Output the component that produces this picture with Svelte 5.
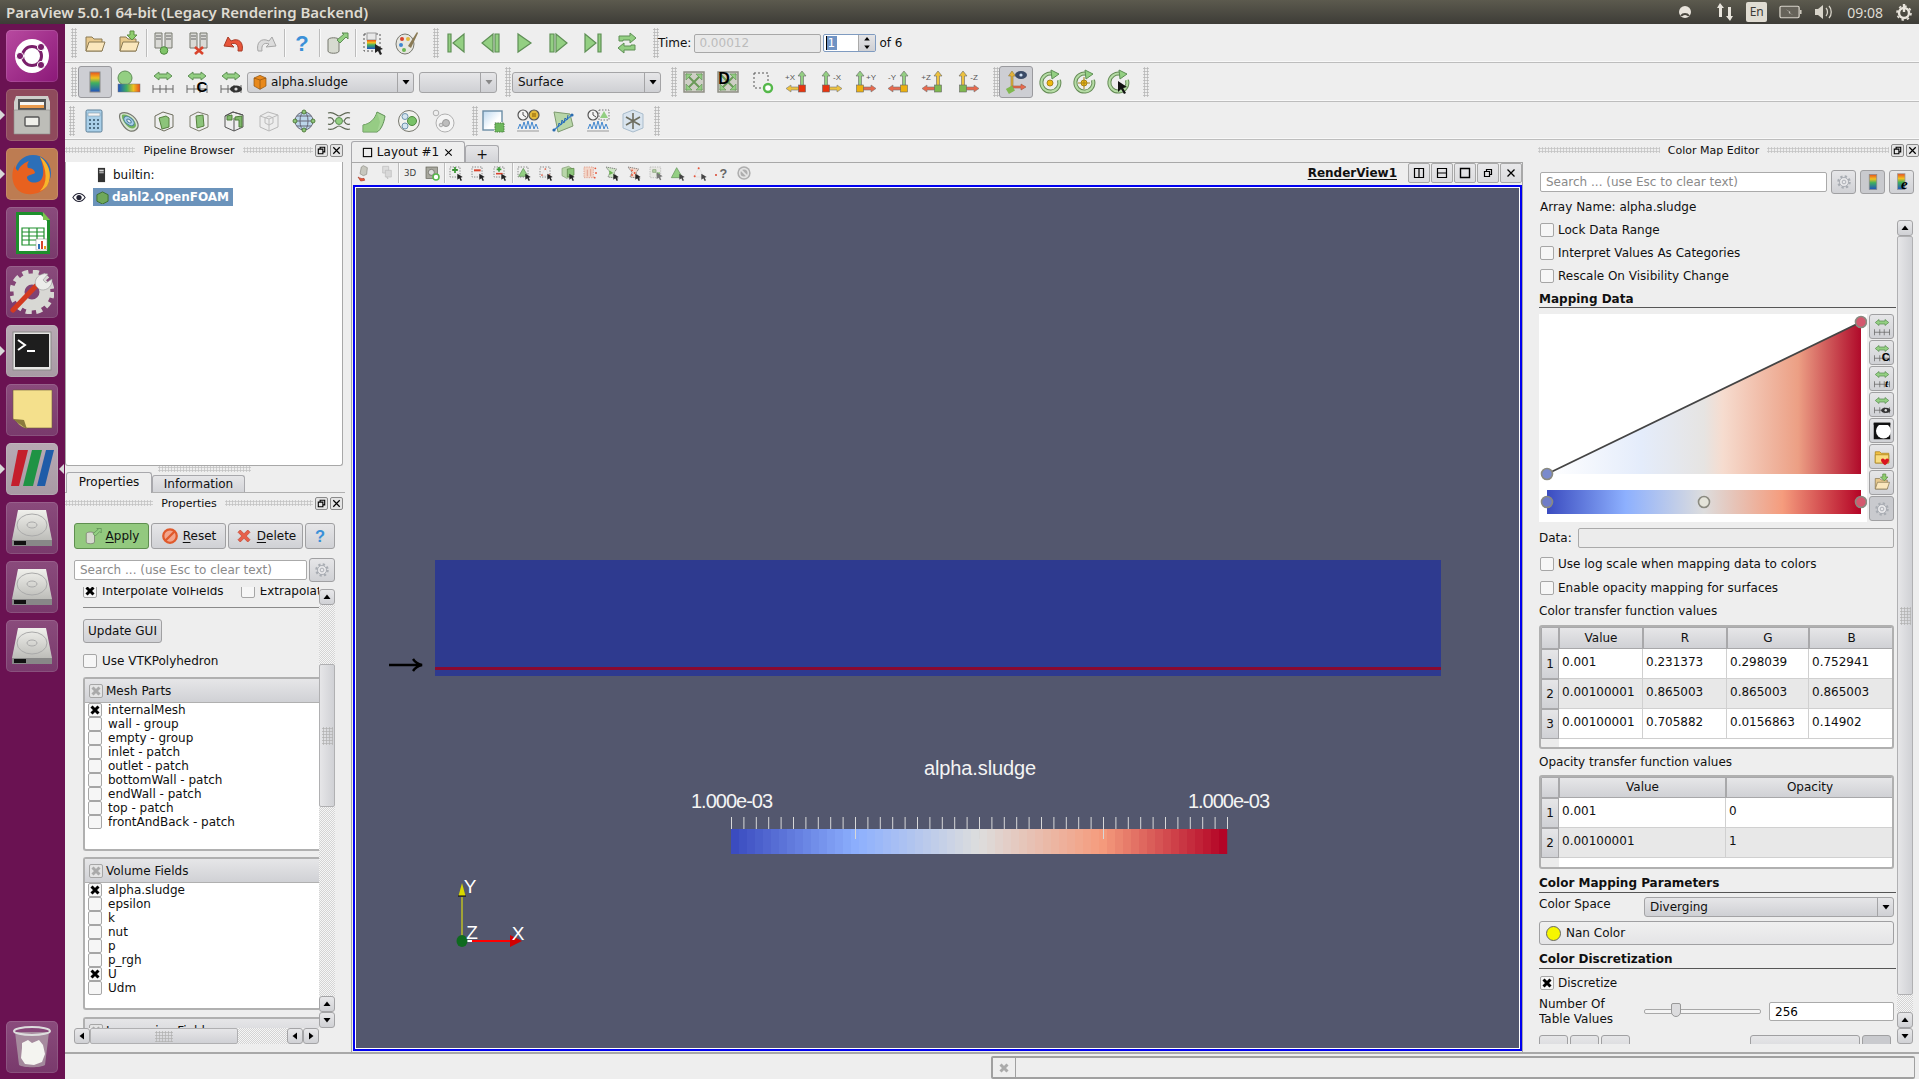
<script>
	// small helpers that build the svg markup of the toolbar icons
	const ln = '#77786f';
	const gr = 'fill="#93cf82" stroke="#5e8f55"';
	const folderBody =
		'<path d="M3 20V6h6l2 2h8v12z" fill="#e8c98d" stroke="#8a7a55"/><path d="M3 20l3-9h16l-3 9z" fill="#fbe7bd" stroke="#8a7a55"/>';
	const ruler = '<path d="M2 19h20M2 15v8M9 15v8M15 15v8M22 15v8" stroke="#666" fill="none"/>';
	const rescaleArrow = `<path d="M3 6l5-4v2h8V2l5 4-5 4V8H8v2z" ${gr}/>`;
	const towers = `<path d="M3 2h7v15H3zM13 2h7v15h-7z" fill="#dadad6" stroke="${ln}"/><path d="M4 5h5M4 8h5M14 5h5M14 8h5" stroke="#666"/>`;
	const eye = '<ellipse cx="17" cy="19" rx="6" ry="3.5" fill="#333"/><circle cx="17" cy="19" r="1.6" fill="#ddd"/>';
	const cursor = '<path d="M14 13l8 5-3 1 2 4-2 1-2-4-3 2z" fill="#222"/>';
	const dotted = 'fill="none" stroke="#555" stroke-dasharray="2 2"';
	const cube = (c) =>
		`<path d="M3 7l8-4 10 3v12l-9 4-9-4z" fill="none" stroke="${c}"/><path d="M7 9l7-2 3 2v9l-7 2z" fill="#8cc47a" stroke="#56803f"/>`;
	const gear =
		'<circle cx="12" cy="12" r="7.5" fill="none" stroke="#a9adb3" stroke-width="3" stroke-dasharray="3 2.9"/><circle cx="12" cy="12" r="6" fill="#e8e8ea" stroke="#9a9ea5"/><circle cx="12" cy="12" r="2.5" fill="none" stroke="#9a9ea5"/>';

	function axis(label, side, sq, up, horiz) {
		const vx = side === 'r' ? 17 : 7;
		const arrow = side === 'r' ? 'M14 17v3H6v2l-5-3.5L6 15v2z' : 'M10 17v3h8v2l5-3.5L18 15v2z';
		return (
			`<path d="M${vx - 1.5} 17V6h-2.5l4-5 4 5h-2.5v11z" fill="${up}" stroke="#666" stroke-width=".6"/>` +
			`<path d="${arrow}" fill="${horiz}" stroke="#777" stroke-width=".6"/>` +
			`<rect x="${vx - 3.5}" y="15" width="7" height="7" fill="${sq}" stroke="#666" stroke-width=".6"/>` +
			`<text x="${side === 'r' ? 5 : 18}" y="10" font-size="8" text-anchor="middle" fill="#555" font-family="Liberation Sans">${label}</text>`
		);
	}

	function spin(center) {
		return (
			'<path d="M15 4a9 9 0 1 0 6 6" fill="none" stroke="#648a55" stroke-width="4"/><path d="M15 4a9 9 0 1 0 6 6" fill="none" stroke="#b5dca5" stroke-width="2"/>' +
			'<path d="M13 0l8 4-7 5z" fill="#93cf82" stroke="#5e8f55"/>' +
			center
		);
	}

	const vcr = (d) => `<path d="${d}" ${gr} stroke-width="1.2"/>`;
	const chart =
		'<path d="M1 22h22" stroke="#999"/><path d="M2 20l2-5 2 5 2-7 2 7 2-8 2 8 2-7 2 7 2-5 2 5" fill="none" stroke="#3f86cf"/>';
	const clock = '<circle cx="7" cy="6" r="5" fill="#f4f4f4" stroke="#555" stroke-width="1.2"/><path d="M7 3v3l3 2" stroke="#555" fill="none"/>';
	const selPick = (c) => `<rect x="3" y="3" width="15" height="15" ${dotted}/>${c}${cursor}`;

	const icons = {
		open: folderBody,
		load: folderBody + `<path d="M13 0h4v4h3l-5 5-5-5h3z" fill="#8fce6e" stroke="#5e8f45"/>`,
		connect: towers + '<circle cx="12" cy="19.5" r="3.8" fill="#7fc468" stroke="#4f8a3f"/>',
		disconnect: towers + '<path d="M8 16l8 7M16 16l-8 7" stroke="#d9432c" stroke-width="2.6"/>',
		undo: '<path d="M21 20c2-8-3-14-11-10L7 6 3 15l10 1-3-3c5-2 8 1 7 7z" fill="#e8553a" stroke="#a83a25"/>',
		redo: '<g transform="matrix(-1 0 0 1 24 0)"><path d="M21 20c2-8-3-14-11-10L7 6 3 15l10 1-3-3c5-2 8 1 7 7z" fill="#dcdcdc" stroke="#a6a6a6"/></g>',
		help: '<text x="12" y="20" font-size="22" font-weight="700" font-family="Liberation Sans" fill="#3a90d8" text-anchor="middle">?</text>',
		macro: `<path d="M3 9c0-3 11-3 11 0v11c0 3-11 3-11 0z" fill="#d7dad0" stroke="${ln}"/><path d="M12 9l7-6-2-1h6v6l-2-2-6 6z" ${gr}/>`,
		shot: `<rect x="3" y="3" width="16" height="17" ${dotted}/><rect x="6" y="2" width="9" height="7" fill="#e8e8e8" stroke="#999"/><rect x="6" y="9" width="9" height="9" fill="url(#rb)"/>${cursor}`,
		palette: `<ellipse cx="10" cy="13" rx="9" ry="10" fill="#e6e6e0" stroke="${ln}"/><circle cx="7" cy="8" r="2" fill="#d9432c"/><circle cx="13" cy="8" r="2" fill="#e2b93b"/><circle cx="6" cy="14" r="2" fill="#3f86cf"/><circle cx="9" cy="19" r="2" fill="#6cb552"/><path d="M13 15l9-14 1 1-7 15z" fill="#8a7a55"/>`,
		first: vcr('M4 3h3v18H4zM20 3v18L9 12z'),
		prev: vcr('M17 3h4v18h-4zM15 3v18L4 12z'),
		play: vcr('M6 3v18l13-9z'),
		next: vcr('M3 3h4v18H3zM9 3v18l11-9z'),
		last: vcr('M17 3h3v18h-3zM4 3v18l11-9z'),
		loop: '<path d="M4 10V5h11V2l6 5-6 5V9H8v1zM20 14v5H9v3l-6-5 6-5v3h7v-1z" fill="#93cf82" stroke="#5e8f55"/>',
		colormap: '<rect x="7" y="2" width="10" height="20" fill="url(#rb)" stroke="#8a8a8a"/>',
		legend: '<circle cx="8" cy="8" r="7" fill="#93cf82" stroke="#5e8f55"/><rect x="1" y="14" width="22" height="8" fill="url(#rbh)" stroke="#777" stroke-width=".5"/>',
		rescale: rescaleArrow + ruler,
		rescaleC: rescaleArrow + ruler + '<text x="17" y="22" font-size="15" font-weight="700" font-family="Liberation Sans" text-anchor="middle" fill="#000">C</text>',
		rescaleT: rescaleArrow + ruler + '<text x="18" y="22" font-size="15" font-weight="700" font-family="Liberation Serif" font-style="italic" text-anchor="middle" fill="#000">t</text>',
		rescaleEye: rescaleArrow + ruler + eye,
		reset: '<rect x="2" y="2" width="20" height="20" fill="#cfcfc6" stroke="#8f8f85" stroke-width="1.5"/><path d="M4 4l16 16M20 4L4 20" stroke="#6a9a58" stroke-width="2"/><path d="M4 4h6L4 10zM20 4h-6l6 6zM4 20h6l-6-6zM20 20h-6l6-6z" fill="#93cf82" stroke="#5e8f55" stroke-width=".6"/>',
		resetD: '<rect x="2" y="2" width="20" height="20" fill="#cfcfc6" stroke="#8f8f85" stroke-width="1.5"/><path d="M4 4l16 16M20 4L4 20" stroke="#6a9a58" stroke-width="2"/><path d="M4 20h6l-6-6zM20 20h-6l6-6zM20 4h-6l6 6z" fill="#93cf82" stroke="#5e8f55" stroke-width=".6"/><text x="8" y="14" font-size="16" font-weight="700" font-family="Liberation Sans" text-anchor="middle" fill="#000">D</text>',
		zoombox: `<rect x="4" y="3" width="14" height="15" ${dotted}/><circle cx="18" cy="18" r="4" fill="#fff" stroke="#55b84a" stroke-width="2.4"/>`,
		px: axis('+X', 'r', '#e8340e', '#93cf82', '#edc23f'),
		mx: axis('-X', 'l', '#e8340e', '#93cf82', '#edc23f'),
		py: axis('+Y', 'l', '#edb10f', '#93cf82', '#e8694c'),
		my: axis('-Y', 'r', '#edb10f', '#93cf82', '#e8694c'),
		pz: axis('+Z', 'r', '#7fb84f', '#edc23f', '#e8694c'),
		mz: axis('-Z', 'l', '#7fb84f', '#edc23f', '#e8694c'),
		axes: '<path d="M7 20V6H4.5L8 1l3.5 5H9v14z" fill="#e3b23a" stroke="#8d7a3a" stroke-width=".6"/><path d="M8 16h9v-2l5 3-5 3v-2H8z" fill="#e8694c" stroke="#9a5a45" stroke-width=".6"/><rect x="3" y="17" width="7" height="6" transform="rotate(-30 6 20)" fill="#7fb84f"/><ellipse cx="17" cy="5" rx="6" ry="4" fill="#3a4a66"/><circle cx="17" cy="5" r="1.6" fill="#cfe0f2"/>',
		rotA: spin('<circle cx="12" cy="13" r="3" fill="#efb80f" stroke="#a8841d"/>'),
		rotB: spin('<circle cx="12" cy="13" r="3" fill="#efb80f" stroke="#a8841d"/><path d="M12 7v12M6 13h12" stroke="#a8841d"/>'),
		rotC: spin('') + '<path d="M12 11l9 6-4 1 3 5-2 1-3-5-3 3z" fill="#111"/>',
		calc: '<rect x="4" y="1" width="16" height="22" rx="1.5" fill="#a9cfe8" stroke="#5d7f96"/><rect x="6" y="4" width="12" height="3" fill="#f4f4f4" stroke="#7f97a7" stroke-width=".6"/><path d="M7 10h2v2H7zM11 10h2v2h-2zM15 10h2v2h-2zM7 14h2v2H7zM11 14h2v2h-2zM15 14h2v2h-2zM7 18h2v2H7zM11 18h2v2h-2zM15 18h2v2h-2z" fill="#4f6f85"/>',
		clip: `<path d="M3 5c6-4 16 2 18 10 1 5-4 8-8 7C7 20 1 10 3 5z" fill="#d9e6d2" stroke="${ln}" stroke-width="1.2"/><path d="M5 6c5-2 13 4 14 10 0 3-3 4-6 3C9 17 4 10 5 6z" fill="#74b35e"/><ellipse cx="12" cy="12" rx="6" ry="3.5" transform="rotate(40 12 12)" fill="#a9cfe8" stroke="#4c7f9e"/><ellipse cx="12" cy="12" rx="2.6" ry="1.4" transform="rotate(40 12 12)" fill="#e8eef2" stroke="#4c7f9e"/>`,
		boxA: cube('#6c6c5c'),
		boxB: '<path d="M3 7l8-4 10 3v12l-9 4-9-4z" fill="none" stroke="#7c7c6c"/><path d="M9 7l7-1 1 11-7 2z" fill="#8cc47a" stroke="#56803f"/>',
		boxC: '<path d="M3 7l8-4 10 3v12l-9 4-9-4z" fill="none" stroke="#555"/><path d="M3 7l8-4 10 3M12 22V9" fill="none" stroke="#555"/><path d="M5 7l5-1v5H5zM13 8l7-1v11h-3V11h-4z" fill="#7fb86b" stroke="#4f7f3a"/>',
		boxD: '<path d="M3 7l8-4 10 3v12l-9 4-9-4z" fill="#ededed" stroke="#b8b8b8"/><path d="M3 7l9 3 9-4M12 10v12M8 9l4-2 4 2v5l-4 2-4-2z" fill="none" stroke="#bcbcbc"/>',
		glyph: '<circle cx="12" cy="12" r="9" fill="#bcd6ea" stroke="#667"/><ellipse cx="12" cy="12" rx="4" ry="9" fill="none" stroke="#667"/><path d="M3 12h18M5 7h14M5 17h14" stroke="#667" fill="none"/><g fill="#8cc47a" stroke="#56803f"><circle cx="12" cy="3" r="2"/><circle cx="12" cy="21" r="2"/><circle cx="3" cy="12" r="2"/><circle cx="21" cy="12" r="2"/></g>',
		stream: `<path d="M1 4c6-2 8 3 11 3s6-5 11-3M1 20c6 2 8-3 11-3s6 5 11 3M1 9c5-2 5 2 6 3-1 1-1 5-6 3M23 9c-5-2-5 2-6 3 1 1 1 5 6 3" fill="none" stroke="#5c6652" stroke-width="1.2"/><circle cx="12" cy="12" r="3.5" fill="#93cf82" stroke="#5e8f55"/>`,
		warp: '<path d="M1 16c7-1 12-6 14-13l8 4c-1 7-4 14-8 16H1z" fill="#a6d695" stroke="#5e8f55"/><path d="M1 16c7-1 12-6 14-13l3 10-3 10H1z" fill="#8cc47a" opacity=".6"/>',
		group: `<circle cx="12" cy="12" r="10.5" fill="#f2f2ee" stroke="${ln}"/><circle cx="8" cy="7.5" r="3" fill="#d5e5f0" stroke="#6f94ae"/><circle cx="8" cy="17" r="3" fill="#d5e5f0" stroke="#6f94ae"/><circle cx="15" cy="12" r="4.5" fill="#79c268" stroke="#4f8a3f"/>`,
		extract: '<circle cx="13" cy="14" r="9" fill="#f4f4f4" stroke="#b0b0b0"/><circle cx="4" cy="4" r="2.8" fill="#eee" stroke="#b0b0b0"/><circle cx="14" cy="14" r="3.5" fill="#bdbdbd" stroke="#999"/><circle cx="9" cy="16" r="1.8" fill="#d8d8d8" stroke="#aaa"/>',
		select: '<rect x="2" y="2" width="19" height="19" fill="url(#sel)" stroke="#6c8da6" stroke-width="1.4"/><rect x="13" y="13" width="10" height="10" fill="#eeeeee"/><rect x="14" y="14" width="9" height="9" fill="#6eb85c" stroke="#4b7f42" stroke-dasharray="1.4 1"/>',
		timeA: clock + '<circle cx="18" cy="6" r="5" fill="#e2b93b" stroke="#555" stroke-width="1.2"/><rect x="16" y="4" width="4" height="4" fill="#b58a1d"/>' + chart,
		plotOver: '<path d="M3 3l16 2 3 12-15 6z" fill="#b8d6a8" stroke="#7e9a70"/><path d="M3 21L21 6" stroke="#3f86cf" stroke-width="1.5"/><circle cx="3" cy="21" r="1.6" fill="#2b6cb0"/><circle cx="21" cy="6" r="1.6" fill="#2b6cb0"/><path d="M7 18l1-4 2 2 1-5 2 3 1-5 2 2 1-5" fill="none" stroke="#2b6cb0"/>',
		timeB: clock + '<rect x="13" y="1" width="10" height="10" fill="none" stroke="#777" stroke-dasharray="1.5 1.5"/><path d="M18 2l4 7h-8z" fill="#93cf82"/>' + chart,
		glyphBox: '<path d="M12 1l10 4v14l-10 4-10-4V5z" fill="#d9e4ee" stroke="#a9bccc"/><path d="M12 4v16M5 8l14 8M19 8L5 16" stroke="#6d6d5f" stroke-width="1.6"/>',
		histA: `<path d="M8 3l3-2 6 3-1 10-5 2-5-3z" fill="#c7c7be" stroke="#8a8a80"/><path d="M3 18c3 2 7 3 9 2l1 3-6 1z" fill="#e8553a" stroke="#a83a25"/>`,
		histB: '<path d="M7 2h9v10H7z" fill="#ddd" stroke="#bbb"/><path d="M11 8h9v10h-9z" fill="#d8d8d8" stroke="#bbb"/><path d="M12 17l4 3-2 1z" fill="#bbb"/>',
		threeD: '<text x="12" y="17" font-size="13" font-family="DejaVu Sans" text-anchor="middle" fill="#444">3D</text>',
		capture: '<rect x="3" y="3" width="17" height="17" fill="#a8a89e" stroke="#5c5c52"/><circle cx="11" cy="11" r="4.5" fill="#ddd" stroke="#5c5c52"/><circle cx="18" cy="18" r="4.5" fill="#fff" stroke="#55b84a" stroke-width="2.4"/>',
		selPlus: selPick('<rect x="7" y="6" width="7" height="2.5" fill="#222"/><path d="M10.5 3v9M6 7.5h9" stroke="#3a9a33" stroke-width="2.6"/>'),
		selMinus: selPick('<path d="M6 8h10" stroke="#d9432c" stroke-width="3"/>'),
		selToggle: selPick('<path d="M10.5 3v7M7 6.5h7" stroke="#3a9a33" stroke-width="2.4"/><path d="M6 13h10" stroke="#d9432c" stroke-width="2.4"/>'),
		selCells: selPick('<path d="M11 5l7 12H4z" fill="#93cf82" stroke="#5e8f55"/>'),
		selPts: selPick('<path d="M11 5l6 11H5z" fill="none" stroke="#ddd"/><g fill="#e8553a"><circle cx="11" cy="6" r="1.3"/><circle cx="6" cy="15" r="1.3"/><circle cx="17" cy="15" r="1.3"/></g>'),
		selFrust: '<path d="M3 5l10-3 6 4v11l-9 3-7-4z" fill="#b8d6a8" stroke="#7e9a70"/><path d="M11 6l10-1v10l-10 3z" fill="#8cc47a" stroke="#56803f"/>' + cursor,
		selFrustPts: '<rect x="3" y="3" width="14" height="16" fill="#f3d6c9" stroke="#d98a73" stroke-dasharray="2 1.5"/><g fill="#e8553a"><circle cx="20" cy="5" r="1.4"/><circle cx="21" cy="12" r="1.4"/><circle cx="19" cy="19" r="1.4"/></g><path d="M8 7v10M13 6v11" stroke="#d98a73"/>',
		selPoly: '<path d="M3 3l16 3-4 6 6 8-15-2 3-7z" fill="#cfe6c6" stroke="#555" stroke-dasharray="2 1"/><path d="M8 8l6 4-6 3z" fill="#6cb552"/>' + cursor,
		selPolyPts: '<path d="M3 3l16 3-4 6 6 8-15-2 3-7z" fill="#f3d6c9" stroke="#555" stroke-dasharray="2 1"/><g fill="#e8553a"><circle cx="9" cy="8" r="1.4"/><circle cx="13" cy="12" r="1.4"/><circle cx="9" cy="15" r="1.4"/></g>' + cursor,
		selBlocks: '<rect x="3" y="3" width="16" height="16" fill="#e8e8e4" stroke="#aaa" stroke-dasharray="2 1.5"/><path d="M7 7h5v4H7z" fill="#b8d6a8" stroke="#7e9a70"/><path d="M13 11h5v5h-5z" fill="#8cc47a"/><path d="M13 11l9 6-4 1 2 4-2 1-2-4-3 2z" fill="#777"/>',
		hoverCells: '<path d="M10 4l9 15H2z" fill="#93cf82" stroke="#5e8f55"/><path d="M14 13l8 5-3 1 2 4-2 1-2-4-3 2z" fill="#444"/>',
		hoverPts: '<path d="M10 4l8 14H3z" fill="none" stroke="#ddd"/><g fill="#e8553a"><circle cx="10" cy="5" r="1.5"/><circle cx="4" cy="17" r="1.5"/></g><path d="M14 13l8 5-3 1 2 4-2 1-2-4-3 2z" fill="#444"/>',
		query: '<circle cx="3" cy="15" r="1.5" fill="#d9432c"/><text x="14" y="20" font-size="19" font-family="Liberation Sans" font-weight="700" text-anchor="middle" fill="#666">?</text>',
		clear: '<circle cx="12" cy="12" r="10" fill="#aeaeae"/><circle cx="12" cy="12" r="6.5" fill="none" stroke="#e4e4e4" stroke-width="2.5"/><path d="M7 7l10 10" stroke="#e4e4e4" stroke-width="2.5"/>',
		gear,
		gearDim: gear,
		cmapE: '<rect x="6" y="1" width="10" height="21" fill="url(#rb)" stroke="#999"/><text x="15" y="21" font-size="20" font-weight="700" font-style="italic" font-family="Liberation Serif" text-anchor="middle" fill="#000">e</text>',
		invert: '<rect x="1" y="1" width="22" height="22" fill="#111"/><circle cx="14" cy="12" r="10" fill="#fff"/><path d="M1 1h22v3H1z" fill="#111"/>',
		favs: '<path d="M3 20V5h6l2 2h10v13z" fill="#f2c040" stroke="#a9821d"/><path d="M3 20V9h18v11z" fill="#f8dc80" stroke="#a9821d"/><path d="M16 23c-7-5-6-9-3-9 2 0 3 2 3 2s1-2 3-2c3 0 4 4-3 9z" fill="#d9141e"/>',
		apply: `<path d="M3 9c0-3 11-3 11 0v11c0 3-11 3-11 0z" fill="#d7dad0" stroke="${ln}"/><path d="M12 9l7-6-2-1h6v6l-2-2-6 6z" ${gr}/>`,
		no: '<circle cx="12" cy="12" r="9" fill="#f2a68e" stroke="#e05a2c" stroke-width="3"/><path d="M6 18L18 6" stroke="#e05a2c" stroke-width="3"/>',
		del: '<path d="M4 7l3-3 5 5 5-5 3 3-5 5 5 5-3 3-5-5-5 5-3-3 5-5z" fill="#e8604a" stroke="#c24a35"/>'
	};

	const row1a = [['open', 'load'], ['connect', 'disconnect', 'undo', 'redo'], ['help'], ['macro'], ['shot', 'palette']];
	const vcrRow = ['first', 'prev', 'play', 'next', 'last', 'loop'];
	const cameraRow = ['reset', 'resetD', 'zoombox', 'px', 'mx', 'py', 'my', 'pz', 'mz'];
	const filtersRow = ['calc', 'clip', 'boxA', 'boxB', 'boxC', 'boxD', 'glyph', 'stream', 'warp', 'group', 'extract'];
	const plotRow = ['select', 'timeA', 'plotOver', 'timeB', 'glyphBox'];
	const viewTools = [
		['histA', 'histB'],
		['threeD', 'capture'],
		['selPlus', 'selMinus', 'selToggle'],
		['selCells', 'selPts', 'selFrust', 'selFrustPts', 'selPoly', 'selPolyPts', 'selBlocks', 'hoverCells', 'hoverPts', 'query', 'clear']
	];
	const sideTools = ['rescale', 'rescaleC', 'rescaleT', 'rescaleEye', 'invert', 'favs', 'load', 'gearDim'];

	const meshParts = [
		['internalMesh', true], ['wall - group', false], ['empty - group', false], ['inlet - patch', false], ['outlet - patch', false],
		['bottomWall - patch', false], ['endWall - patch', false], ['top - patch', false], ['frontAndBack - patch', false]
	];
	const volumeFields = [
		['alpha.sludge', true], ['epsilon', false], ['k', false], ['nut', false], ['p', false], ['p_rgh', false], ['U', true], ['Udm', false]
	];
	const colorRows = [
		['0.001', '0.231373', '0.298039', '0.752941'],
		['0.00100001', '0.865003', '0.865003', '0.865003'],
		['0.00100001', '0.705882', '0.0156863', '0.14902']
	];
	const opacityRows = [['0.001', '0'], ['0.00100001', '1']];

	// cool to warm colour map of the scalar bar, in visible steps
	const stops = [[0, 59, 76, 192], [0.25, 141, 176, 254], [0.5, 221, 221, 221], [0.75, 245, 156, 125], [1, 180, 4, 38]];
	function cmap(t) {
		let i = 0;
		while (i < stops.length - 2 && t > stops[i + 1][0]) i++;
		const a = stops[i], b = stops[i + 1], f = (t - a[0]) / (b[0] - a[0]);
		const c = [1, 2, 3].map((k) => Math.round(a[k] + (b[k] - a[k]) * f));
		return `rgb(${c[0]},${c[1]},${c[2]})`;
	}
	const barSteps = Array.from({ length: 62 }, (_, i) => ({ x: i * 8, fill: cmap(i / 61) }));
	const ticks = Array.from({ length: 41 }, (_, i) => ({ x: i * 12.4 + 0.5, major: i % 10 === 0 && i > 0 && i < 40 }));
</script>

{#snippet ic(name, cls = 'i24')}
	<svg class={cls} viewBox="0 0 24 24">{@html icons[name]}</svg>
{/snippet}

{#snippet check(on = false)}
	<span class="cb">
		{#if on}
			<svg viewBox="0 0 12 12"><path d="M2.5 2.5l7 7M9.5 2.5l-7 7" stroke="#000" stroke-width="3" /></svg>
		{/if}
	</span>
{/snippet}

{#snippet floatBtns()}
	<span class="dockbtn">
		<svg viewBox="0 0 12 12"><path d="M2.5 4.5h5v5h-5zM4.5 4.5v-2h5v5h-2" fill="none" stroke="#000" stroke-width="1.2" /></svg>
	</span>
	<span class="dockbtn">
		<svg viewBox="0 0 12 12"><path d="M2.5 2.5l7 7M9.5 2.5l-7 7" stroke="#000" stroke-width="1.3" /></svg>
	</span>
{/snippet}

{#snippet dockHead(title)}
	<div class="dockhead">
		<i class="hgrip"></i>
		<span>{title}</span>
		<i class="hgrip"></i>
		{@render floatBtns()}
	</div>
{/snippet}

{#snippet arrow(dir)}
	<span class="sbtn">
		<svg viewBox="0 0 10 10">
			{#if dir === 'up'}<path d="M1.5 7h7L5 2.5z" />{/if}
			{#if dir === 'down'}<path d="M1.5 3h7L5 7.5z" />{/if}
			{#if dir === 'left'}<path d="M7 1.5v7L2.5 5z" />{/if}
			{#if dir === 'right'}<path d="M3 1.5v7L7.5 5z" />{/if}
		</svg>
	</span>
{/snippet}

{#snippet listBox(title, items, cls)}
	<div class="listbox {cls}">
		<div class="listhead">
			<span class="cb dim">
				<svg viewBox="0 0 12 12"><path d="M2.5 2.5l7 7M9.5 2.5l-7 7" stroke="#aaa" stroke-width="3" /></svg>
			</span>
			{title}
		</div>
		{#each items as [label, on]}
			<div class="listrow">{@render check(on)}<span>{label}</span></div>
		{/each}
	</div>
{/snippet}

<svg class="defs" width="0" height="0">
	<defs>
		<linearGradient id="rb" x1="0" y1="0" x2="0" y2="1">
			<stop offset="0" stop-color="#e8501c" /><stop offset=".3" stop-color="#f0c020" /><stop offset=".55" stop-color="#40b060" /><stop offset="1" stop-color="#2050c0" />
		</linearGradient>
		<linearGradient id="rbh" x1="0" y1="0" x2="1" y2="0">
			<stop offset="0" stop-color="#2050c0" /><stop offset=".4" stop-color="#40b060" /><stop offset=".7" stop-color="#f0c020" /><stop offset="1" stop-color="#e8501c" />
		</linearGradient>
		<linearGradient id="sel" x1="0" y1="0" x2="1" y2="1">
			<stop offset="0" stop-color="#bcd8f0" /><stop offset=".6" stop-color="#fff" />
		</linearGradient>
		<linearGradient id="wedge" x1="0" y1="0" x2="1" y2="0">
			<stop offset="0" stop-color="#fff" /><stop offset=".3" stop-color="#e4ecfb" /><stop offset=".5" stop-color="#e6e4e2" /><stop offset=".56" stop-color="#f6dccf" /><stop offset=".8" stop-color="#ec9f84" /><stop offset="1" stop-color="#b00a2a" />
		</linearGradient>
		<linearGradient id="cbar" x1="0" y1="0" x2="1" y2="0">
			<stop offset="0" stop-color="#3b4cc0" /><stop offset=".25" stop-color="#8db0fe" /><stop offset=".5" stop-color="#dddddd" /><stop offset=".75" stop-color="#f59c7d" /><stop offset="1" stop-color="#b40426" />
		</linearGradient>
		<linearGradient id="tile" x1="0" y1="0" x2="0" y2="1">
			<stop offset="0" stop-color="#f0f0ec" /><stop offset="1" stop-color="#b4b4b0" />
		</linearGradient>
	</defs>
</svg>

<div class="desktop">
	<header class="topbar">
		<span class="wintitle">ParaView 5.0.1 64-bit (Legacy Rendering Backend)</span>
		<div class="tray">
			<svg class="t1" viewBox="0 0 14 14"><circle cx="7" cy="7" r="6" fill="#e8e4dc" /><path d="M3 11a5 5 0 0 1 8 0" fill="none" stroke="#4a4840" stroke-width="2" /></svg>
			<svg class="t2" viewBox="0 0 20 20"><path d="M5 1l4 5H7v9H4V6H2zM15 19l-4-5h2V5h3v9h2z" fill="#e8e4dc" /></svg>
			<span class="lang">En</span>
			<svg class="t3" viewBox="0 0 24 14"><rect x="1" y="1" width="20" height="12" rx="1.5" fill="#66635a" stroke="#d8d4ca" stroke-width="1.3" /><path d="M22 5h1.5v4H22" fill="#d8d4ca" /><path d="M7 4l5 3-1 1 4 2-5-2 1-1z" fill="#e8e4dc" /></svg>
			<svg class="t4" viewBox="0 0 20 18"><path d="M1 6h3l5-4v14l-5-4H1z" fill="#d8d4ca" /><path d="M12 5c2 2 2 6 0 8M15 3c3 3 3 9 0 12" fill="none" stroke="#d8d4ca" stroke-width="1.3" /></svg>
			<span class="clock">09:08</span>
			<svg class="t5" viewBox="0 0 18 18"><circle cx="9" cy="10" r="5" fill="none" stroke="#e8e4dc" stroke-width="2.4" /><circle cx="9" cy="10" r="7" fill="none" stroke="#e8e4dc" stroke-width="1.6" stroke-dasharray="2.5 3" /><path d="M9 1v8" stroke="#e8e4dc" stroke-width="2.4" /></svg>
		</div>
	</header>

	<div class="body">
		<aside class="launcher">
			<div class="tile ubuntu">
				<svg viewBox="0 0 44 44"><circle cx="22" cy="22" r="17" fill="#fff" /><circle cx="22" cy="22" r="9.5" fill="none" stroke="#7a1f6a" stroke-width="3" /><circle cx="31" cy="13" r="3.6" fill="#7a1f6a" stroke="#fff" /><circle cx="31" cy="31" r="3.6" fill="#7a1f6a" stroke="#fff" /><circle cx="10" cy="22" r="3.6" fill="#7a1f6a" stroke="#fff" /></svg>
			</div>
			<div class="tile files pip">
				<svg viewBox="0 0 44 44"><path d="M6 3h32l2 6v32H4V9z" fill="#cfcfcb" /><path d="M8 6h28v12H8z" fill="#555" /><path d="M10 9h24v3H10z" fill="#f6f6f2" /><path d="M10 12h24v3H10z" fill="#e89a4c" /><path d="M4 17h36v24H4z" fill="#bdbdb8" stroke="#8f8f8a" stroke-width=".6" /><rect x="15" y="24" width="14" height="9" rx="1" fill="#efefea" stroke="#555" stroke-width="1.4" /></svg>
			</div>
			<div class="tile fox pip">
				<svg viewBox="0 0 44 44"><circle cx="23" cy="21" r="18" fill="#2c6fb8" /><path d="M30 5c9 6 13 19 7 29-5 8-19 11-28 5C1 33 1 20 5 13c0 3 1 4 3 6 2-6 8-9 11-10-2 3-2 5-1 7 5 0 7 3 7 5-2 2-6 1-8 4 0 5 8 8 14 3 4-5 2-16-1-23z" fill="#e8611f" /><path d="M30 5c9 6 13 19 7 29-2 2-4 4-7 5 8-8 7-21 0-34z" fill="#f6b62c" /></svg>
			</div>
			<div class="tile plain">
				<svg viewBox="0 0 44 44"><path d="M6 1h26l8 8v34H6z" fill="#1e8f2c" /><path d="M9 4h22l6 6v30H9z" fill="#fff" /><path d="M33 1l7 8h-7z" fill="#7cc24d" /><path d="M12 17h22v17H12zM12 21h22M12 25h22M12 29h22M19 17v17M27 17v17" fill="none" stroke="#1e8f2c" stroke-width="1.2" /><rect x="26" y="28" width="11" height="11" fill="#fff" stroke="#888" stroke-width=".5" /><path d="M28 33h2v5h-2z" fill="#2c6fb8" /><path d="M31 30h2v8h-2z" fill="#d9432c" /><path d="M34 35h2v3h-2z" fill="#e89a1c" /></svg>
			</div>
			<div class="tile plain">
				<svg viewBox="0 0 44 44"><circle cx="22" cy="22" r="13" fill="none" stroke="#d8d8d4" stroke-width="11" /><circle cx="22" cy="22" r="20" fill="none" stroke="#d8d8d4" stroke-width="5" stroke-dasharray="6 4.5" /><path d="M3 40l23-24" stroke="#d33a20" stroke-width="5" stroke-linecap="round" /><path d="M26 16c-3-6 3-14 12-12l-5 6 3 3 6-4c1 9-8 13-13 10z" fill="#ececea" stroke="#999" stroke-width=".6" /></svg>
			</div>
			<div class="tile light pip">
				<svg viewBox="0 0 44 44"><rect x="3" y="3" width="38" height="38" fill="#e6e6e4" stroke="#8a8a88" /><rect x="5" y="5" width="34" height="33" fill="#1e1e1e" /><path d="M8 11l7 5-7 5" fill="none" stroke="#fff" stroke-width="2" /><path d="M17 22h8" stroke="#fff" stroke-width="2" /></svg>
			</div>
			<div class="tile plain">
				<svg viewBox="0 0 44 44"><path d="M3 2h39v38H17C9 40 7 32 3 31z" fill="#f4e08c" stroke="#6b5a3a" stroke-width=".6" /><path d="M3 31c5 0 9 1 11 1l3 9C10 37 6 33 3 31z" fill="#8a7a3c" /></svg>
			</div>
			<div class="tile light pip both">
				<svg viewBox="0 0 44 44"><path d="M8 3h10L9 39H1z" fill="#c41e2c" /><path d="M22 3h10L23 39H13z" fill="#1f9344" /><path d="M36 3h8l-9 36H27z" fill="#1f5ca8" /></svg>
			</div>
			{#each [0, 1, 2] as d}
				<div class="tile plain">
					<svg viewBox="0 0 44 44"><path d="M8 4h28l6 30v5H2v-5z" fill="url(#tile)" /><ellipse cx="22" cy="19" rx="15" ry="11" fill="none" stroke="#aaa" /><ellipse cx="22" cy="19" rx="5" ry="3" fill="none" stroke="#aaa" /><path d="M2 34h40v6H2z" fill="#888" /><path d="M4 35h12v4H4z" fill="#111" /></svg>
				</div>
			{/each}
			<div class="tile plain trash">
				<svg viewBox="0 0 44 44"><path d="M5 7l4 33c4 3 22 3 26 0l4-33" fill="#b8b0b4" opacity=".65" /><path d="M12 18l6-3 4 3 7-3 4 5 2 9-3 8-8 3-9-1-4-6 1-10z" fill="#f4f4f0" /><ellipse cx="22" cy="6" rx="18" ry="4" fill="none" stroke="#ddd" stroke-width="2" /></svg>
			</div>
		</aside>

		<div class="window">
			<div class="toolbar r1">
				<i class="vgrip"></i>
				{#each row1a as group, g}
					{#if g > 0}<i class="sep"></i>{/if}
					{#each group as n}<span class="slot">{@render ic(n)}</span>{/each}
				{/each}
				<i class="vgrip g2"></i>
				{#each vcrRow as n}<span class="slot">{@render ic(n)}</span>{/each}
				<i class="vgrip g3"></i>
				<span class="time">Time:</span>
				<input class="timebox" value="0.00012" disabled />
				<span class="spin">
					<span class="spinval"><span class="caret">1</span></span>
					<span class="spinbtns">
						<svg viewBox="0 0 10 10"><path d="M1.5 7h7L5 2.5z" /></svg>
						<svg viewBox="0 0 10 10"><path d="M1.5 3h7L5 7.5z" /></svg>
					</span>
				</span>
				<span class="ofsix">of 6</span>
			</div>

			<div class="toolbar r2">
				<i class="vgrip"></i>
				<span class="slot on">{@render ic('colormap')}</span>
				{#each ['legend', 'rescale', 'rescaleC', 'rescaleEye'] as n}
					<span class="slot">{@render ic(n)}</span>
				{/each}
				<span class="combo c1">
					<svg class="i16" viewBox="0 0 24 24"><path d="M3 6l9-4 9 4v12l-9 5-9-5z" fill="#e8891c" stroke="#8a4f10" /><path d="M12 9v14M3 6l9 3 9-3" fill="none" stroke="#8a4f10" /></svg>
					<span class="ctext">alpha.sludge</span>
					<span class="cdrop"><svg viewBox="0 0 10 10"><path d="M1.5 3h7L5 7.5z" /></svg></span>
				</span>
				<span class="combo c2">
					<span class="ctext"></span>
					<span class="cdrop off"><svg viewBox="0 0 10 10"><path d="M1.5 3h7L5 7.5z" /></svg></span>
				</span>
				<i class="vgrip g4"></i>
				<span class="combo c3">
					<span class="ctext">Surface</span>
					<span class="cdrop"><svg viewBox="0 0 10 10"><path d="M1.5 3h7L5 7.5z" /></svg></span>
				</span>
				<i class="vgrip g5"></i>
				{#each cameraRow as n}<span class="slot cam">{@render ic(n)}</span>{/each}
				<i class="vgrip g6"></i>
				<span class="slot on">{@render ic('axes')}</span>
				{#each ['rotA', 'rotB', 'rotC'] as n}<span class="slot">{@render ic(n)}</span>{/each}
				<i class="vgrip g6"></i>
			</div>

			<div class="toolbar r3">
				<i class="vgrip"></i>
				{#each filtersRow as n}<span class="slot">{@render ic(n)}</span>{/each}
				<i class="vgrip g7"></i>
				{#each plotRow as n}<span class="slot">{@render ic(n)}</span>{/each}
				<i class="vgrip g8"></i>
			</div>

			<div class="workspace">
				<section class="leftdock">
					{@render dockHead('Pipeline Browser')}
					<div class="tree">
						<div class="node builtin">
							<svg class="srv" viewBox="0 0 10 18"><rect x="1" y="1" width="8" height="16" fill="#333" /><rect x="2.5" y="3" width="5" height="2" fill="#ddd" /><rect x="2.5" y="6" width="5" height="1" fill="#ddd" /></svg>
							builtin:
						</div>
						<div class="node">
							<svg class="eyeic" viewBox="0 0 16 12"><path d="M1 6c4-6 10-6 14 0-4 6-10 6-14 0z" fill="#fff" stroke="#223" stroke-width="1.2" /><circle cx="8" cy="6" r="3" fill="#223" /></svg>
							<span class="sel"><svg class="srcic" viewBox="0 0 14 14"><path d="M1 4l6-3 6 3v7l-6 3-6-3z" fill="#6fa85a" stroke="#3e6f30" /></svg>dahl2.OpenFOAM</span>
						</div>
					</div>
					<div class="splitgrip"><i class="hgrip"></i></div>
					<div class="tabs">
						<span class="tab active">Properties</span>
						<span class="tab">Information</span>
					</div>
					{@render dockHead('Properties')}
					<div class="actions">
						<span class="btn apply">{@render ic('apply', 'i18')}<span><u>A</u>pply</span></span>
						<span class="btn">{@render ic('no', 'i18')}<span><u>R</u>eset</span></span>
						<span class="btn">{@render ic('del', 'i18')}<span><u>D</u>elete</span></span>
						<span class="btn q">{@render ic('help', 'i18')}</span>
					</div>
					<div class="searchrow">
						<input class="search" placeholder="Search ... (use Esc to clear text)" />
						<span class="btn gearbtn">{@render ic('gear', 'i18')}</span>
					</div>
					<div class="propscroll">
						<div class="propclip">
							<div class="clipcontent">
								<div class="interp">
									{@render check(true)}<span class="lab1">Interpolate VolFields</span>
									{@render check(false)}<span>Extrapolate Patches</span>
								</div>
								<div class="rule"></div>
								<span class="btn update">Update GUI</span>
								<div class="checkline vtk">{@render check(false)}<span>Use VTKPolyhedron</span></div>
								{@render listBox('Mesh Parts', meshParts, 'parts')}
								{@render listBox('Volume Fields', volumeFields, 'vol')}
								{@render listBox('Lagrangian Fields', [], 'lag')}
							</div>
						</div>
						<div class="vbar">
							{@render arrow('up')}
							<span class="track t-a"></span>
							<span class="handle hv"><i class="dots"></i></span>
							<span class="track"></span>
							{@render arrow('up')}
							{@render arrow('down')}
						</div>
						<div class="hbar">
							{@render arrow('left')}
							<span class="handle hh"><i class="dots"></i></span>
							<span class="track"></span>
							{@render arrow('left')}
							{@render arrow('right')}
						</div>
					</div>
				</section>

				<i class="midgrip"></i>

				<section class="center">
					<div class="tabbar">
						<span class="ltab active">
							<svg viewBox="0 0 12 12"><rect x="1.5" y="1.5" width="9" height="9" fill="none" stroke="#000" stroke-width="1.2" /></svg>
							Layout #1
							<svg viewBox="0 0 12 12"><path d="M2.5 2.5l7 7M9.5 2.5l-7 7" stroke="#000" stroke-width="1.2" /></svg>
						</span>
						<span class="ltab plus">+</span>
					</div>
					<div class="frame">
						<div class="viewtools">
							{#each viewTools as group, g}
								{#if g > 0}<i class="sep"></i>{/if}
								{#each group as n}<span class="vslot">{@render ic(n, 'i16')}</span>{/each}
							{/each}
							<span class="viewname">RenderView1</span>
							<span class="vbtns">
								<span class="vb"><svg viewBox="0 0 12 12"><path d="M1.5 1.5h9v9h-9zM6 1.5v9" fill="none" stroke="#000" stroke-width="1.2" /></svg></span>
								<span class="vb"><svg viewBox="0 0 12 12"><path d="M1.5 1.5h9v9h-9zM1.5 6h9" fill="none" stroke="#000" stroke-width="1.2" /></svg></span>
								<span class="vb"><svg viewBox="0 0 12 12"><path d="M1.5 1.5h9v9h-9z" fill="none" stroke="#000" stroke-width="1.4" /></svg></span>
								<span class="vb"><svg viewBox="0 0 12 12"><path d="M2.5 4.5h5v5h-5zM4.5 4.5v-2h5v5h-2" fill="none" stroke="#000" stroke-width="1.2" /></svg></span>
								<span class="vb"><svg viewBox="0 0 12 12"><path d="M2.5 2.5l7 7M9.5 2.5l-7 7" stroke="#000" stroke-width="1.3" /></svg></span>
							</span>
						</div>
						<div class="view">
							<div class="scene">
								<div class="band"><i class="layer"></i></div>
								<svg class="marker" viewBox="0 0 36 16"><path d="M1 8h32M25 2c2 3 5 5 9 6-4 1-7 3-9 6" fill="none" stroke="#000" stroke-width="2.4" /></svg>
								<div class="legend">
									<div class="legtitle">alpha.sludge</div>
									<div class="leglabels"><span>1.000e-03</span><span>1.000e-03</span></div>
									<svg class="legbar" viewBox="0 0 497 37">
										{#each barSteps as s}
											<rect x={s.x} y="12" width="8.2" height="25" fill={s.fill} />
										{/each}
										{#each ticks as t}
											<line x1={t.x} x2={t.x} y1="0" y2={t.major ? 22 : 12} stroke="#d8d8d8" stroke-width="1" />
										{/each}
									</svg>
								</div>
								<svg class="axes" viewBox="0 0 90 80">
									<line x1="12" y1="22" x2="12" y2="66" stroke="#f0f000" />
									<path d="M12 8l-3.5 13h7z" fill="#d8d800" /><path d="M8 21h8" stroke="#000" />
									<line x1="12" y1="66" x2="66" y2="66" stroke="#f00" stroke-width="2" /><line x1="16" y1="66" x2="22" y2="66" stroke="#fff" stroke-width="2" />
									<path d="M60 60l12 6-12 6z" fill="#d00000" />
									<ellipse cx="12" cy="66" rx="5.5" ry="6" fill="#0f6a1f" />
									<text x="20" y="18" class="axlab">Y</text>
									<text x="22" y="64" class="axlab">Z</text>
									<text x="68" y="65" class="axlab">X</text>
								</svg>
							</div>
						</div>
					</div>
				</section>

				<section class="rightdock">
					{@render dockHead('Color Map Editor')}
					<div class="searchrow cm">
						<input class="search" placeholder="Search ... (use Esc to clear text)" />
						<span class="btn gearbtn">{@render ic('gear', 'i18')}</span>
						<span class="btn gearbtn on">{@render ic('colormap', 'i18')}</span>
						<span class="btn gearbtn">{@render ic('cmapE', 'i18')}</span>
					</div>
					<div class="arrayname">Array Name: alpha.sludge</div>
					<div class="cmscroll">
						<div class="cmcontent">
							<div class="checkline c23">{@render check(false)}<span>Lock Data Range</span></div>
							<div class="checkline c23">{@render check(false)}<span>Interpret Values As Categories</span></div>
							<div class="checkline c23">{@render check(false)}<span>Rescale On Visibility Change</span></div>
							<h3 class="grouphead map">Mapping Data</h3>
							<div class="editor">
								<svg class="tf" viewBox="0 0 328 208">
									<path d="M8 160L322 8v152z" fill="url(#wedge)" />
									<path d="M8 160L322 8" stroke="#444" stroke-width="1.8" fill="none" />
									<rect x="8" y="176" width="314" height="24" fill="url(#cbar)" />
									<g stroke="#8a8a80" stroke-width="1.6">
										<circle cx="322" cy="8" r="5.5" fill="#d4586e" />
										<circle cx="8" cy="160" r="5.5" fill="#7a8acc" />
										<circle cx="8" cy="188" r="5.5" fill="#6f7cc8" />
										<circle cx="165" cy="188" r="5.5" fill="#e4e4da" />
										<circle cx="322" cy="188" r="5.5" fill="#d4586e" />
									</g>
								</svg>
								<div class="sidetools">
									{#each sideTools as n, i}
										<span class="btn sb" class:on={i === 7}>{@render ic(n, 'i18')}</span>
									{/each}
								</div>
							</div>
							<div class="dataline"><span>Data:</span><input class="databox" disabled /></div>
							<div class="checkline logl">{@render check(false)}<span>Use log scale when mapping data to colors</span></div>
							<div class="checkline opac">{@render check(false)}<span>Enable opacity mapping for surfaces</span></div>
							<div class="sublabel l1">Color transfer function values</div>
							<div class="vtable tall">
								<div class="vgrid four">
									<b class="th"></b><b class="th">Value</b><b class="th">R</b><b class="th">G</b><b class="th">B</b>
									{#each colorRows as row, r}
										<b class="rh">{r + 1}</b>
										{#each row as cell}<span class="td" class:alt={r === 1}>{cell}</span>{/each}
									{/each}
								</div>
							</div>
							<div class="sublabel l2">Opacity transfer function values</div>
							<div class="vtable short">
								<div class="vgrid two">
									<b class="th"></b><b class="th">Value</b><b class="th">Opacity</b>
									{#each opacityRows as row, r}
										<b class="rh">{r + 1}</b>
										{#each row as cell}<span class="td" class:alt={r === 1}>{cell}</span>{/each}
									{/each}
								</div>
							</div>
							<h3 class="grouphead par">Color Mapping Parameters</h3>
							<div class="spaceline">
								<span class="sl">Color Space</span>
								<span class="combo c4">
									<span class="ctext">Diverging</span>
									<span class="cdrop"><svg viewBox="0 0 10 10"><path d="M1.5 3h7L5 7.5z" /></svg></span>
								</span>
							</div>
							<span class="btn nan"><i class="dot"></i>Nan Color</span>
							<h3 class="grouphead disc">Color Discretization</h3>
							<div class="checkline c23 dsc">{@render check(true)}<span>Discretize</span></div>
							<div class="numline">
								<span class="numlabel">Number Of<br />Table Values</span>
								<span class="slider"><i class="thumb"></i></span>
								<input class="num" value="256" />
							</div>
							<div class="bottombtns">
								<span class="btn b1"></span><span class="btn b1"></span><span class="btn b1"></span>
								<span class="btn b2"></span><span class="btn b1 on"></span>
							</div>
						</div>
						<div class="vbar cmbar">
							{@render arrow('up')}
							<span class="handle hc"><i class="dots"></i></span>
							<span class="track"></span>
							{@render arrow('up')}
							{@render arrow('down')}
						</div>
					</div>
				</section>
			</div>

			<footer class="status">
				<div class="statusbox">
					<span class="stbtn"><svg viewBox="0 0 12 12"><path d="M2.5 2.5l7 7M9.5 2.5l-7 7" stroke="#aaa" stroke-width="3" /></svg></span>
				</div>
			</footer>
		</div>
	</div>
</div>

<style>
	:global(body) {
		margin: 0;
		background: #eeeeee;
	}

	.defs {
		display: block;
		height: 0;
	}

	.desktop {
		width: 1919px;
		height: 1079px;
		overflow: hidden;
		display: flex;
		flex-direction: column;
		font-family: 'DejaVu Sans', sans-serif;
		font-size: 12px;
		color: #101010;
		background: #eeeeee;
	}

	u {
		text-underline-offset: 2px;
	}

	/* Top panel */
	.topbar {
		height: 24px;
		flex: none;
		display: flex;
		align-items: center;
		justify-content: space-between;
		padding: 0 6px;
		background: linear-gradient(#5c5a4e, #3d3c37);
		color: #dfdbd2;
	}

	.wintitle {
		font-family: 'Noto Sans', sans-serif;
		font-weight: 600;
		font-size: 15px;
		white-space: nowrap;
	}

	.tray {
		display: flex;
		align-items: center;
		height: 24px;
	}

	.tray svg {
		display: block;
	}

	.t1 { width: 14px; height: 14px; }
	.t2 { width: 20px; height: 20px; margin-left: 23px; }
	.t3 { width: 23px; height: 14px; margin-left: 12px; }
	.t4 { width: 20px; height: 18px; margin-left: 12px; }
	.t5 { width: 18px; height: 18px; margin-left: 12px; }

	.lang {
		width: 21px;
		height: 20px;
		margin-left: 11px;
		background: #e0dcd2;
		color: #3c3b37;
		border-radius: 2px;
		font-family: 'Noto Sans', sans-serif;
		font-size: 12px;
		line-height: 20px;
		text-align: center;
	}

	.clock {
		margin-left: 13px;
		font-family: 'Noto Sans', sans-serif;
		font-size: 14px;
	}

	.body {
		flex: 1;
		display: flex;
		min-height: 0;
	}

	/* Launcher */
	.launcher {
		width: 65px;
		flex: none;
		box-sizing: border-box;
		padding: 6px 0 6px 6px;
		display: flex;
		flex-direction: column;
		gap: 7px;
		background: #6a1252;
	}

	.tile {
		position: relative;
		width: 52px;
		height: 52px;
		box-sizing: border-box;
		padding: 4px;
		border-radius: 5px;
		flex: none;
		box-shadow: inset 0 0 0 1px rgba(255, 255, 255, 0.12);
	}

	.tile svg {
		display: block;
		width: 44px;
		height: 44px;
	}

	.ubuntu { background: linear-gradient(135deg, #b84aa0, #8b1878); }
	.files { background: #8f4a5c; }
	.fox { background: #bd7c52; }
	.plain { background: linear-gradient(#8a4b7c, #793a6c); }
	.light { background: linear-gradient(#b8aab4, #a89aa4); }
	.trash { margin-top: auto; }

	.pip::before {
		content: '';
		position: absolute;
		left: -6px;
		top: 21px;
		border-left: 5px solid #d8d8d8;
		border-top: 5px solid transparent;
		border-bottom: 5px solid transparent;
	}

	.both::after {
		content: '';
		position: absolute;
		right: -6px;
		top: 21px;
		border-right: 5px solid #d8d8d8;
		border-top: 5px solid transparent;
		border-bottom: 5px solid transparent;
	}

	/* Window */
	.window {
		flex: 1;
		min-width: 0;
		display: flex;
		flex-direction: column;
	}

	.toolbar {
		flex: none;
		box-sizing: border-box;
		display: flex;
		align-items: center;
		padding-left: 5px;
		border-bottom: 1px solid #bdbdbd;
		box-shadow: inset 0 -1px 0 #f8f8f8;
	}

	.r1 { height: 39px; --slot: 34.2px; }
	.r2 { height: 39px; --slot: 34px; }
	.r3 { height: 38px; --slot: 35px; padding-left: 3px; }

	.slot {
		width: var(--slot);
		height: 32px;
		flex: none;
		box-sizing: border-box;
		display: flex;
		align-items: center;
		justify-content: center;
		border: 1px solid transparent;
		border-radius: 3px;
	}

	.slot.cam {
		width: 34.2px;
	}

	.slot.on {
		background: #cdced3;
		border-color: #9a9a9e;
	}

	.i24 { width: 24px; height: 24px; display: block; overflow: visible; }
	.i18 { width: 18px; height: 18px; display: block; overflow: visible; }
	.i16 { width: 16px; height: 16px; display: block; flex: none; overflow: visible; }

	.vgrip {
		width: 6px;
		height: 30px;
		flex: none;
		margin: 0 1px;
		background: radial-gradient(circle, #b8b8b8 45%, transparent 55%) 0 0 / 3px 3px;
	}

	.g2 { margin-left: 9px; margin-right: 0; }
	.g3 { margin-left: 9px; margin-right: 0; }
	.g4 { margin-left: 8px; margin-right: 0; }
	.g5 { margin-left: 10px; margin-right: 0; }
	.g6 { margin-left: 8px; margin-right: 0; }
	.g7 { margin-left: 11px; margin-right: -3px; }
	.g8 { margin-left: 4px; }

	.sep {
		width: 1px;
		height: 28px;
		flex: none;
		background: #bcbcbc;
		box-shadow: 1px 0 0 #fafafa;
	}

	.time {
		margin-left: -1px;
		font-size: 12px;
	}

	.timebox {
		width: 127px;
		height: 19px;
		box-sizing: border-box;
		margin-left: 3px;
		padding: 0 4px;
		border: 1px solid #a8a8a8;
		border-radius: 2px;
		background: #e9e9e9;
		color: #bcbcbc;
		font: 12px 'DejaVu Sans', sans-serif;
	}

	.spin {
		display: flex;
		width: 53px;
		height: 18px;
		margin-left: 2px;
		border: 1px solid #7f9bc0;
		border-radius: 2px;
		box-sizing: border-box;
		background: #fff;
	}

	.spinval {
		flex: 1;
		padding-left: 2px;
		line-height: 16px;
	}

	.caret {
		background: #6f93c4;
		color: #fff;
		border-left: 1px solid #000;
		padding-right: 2px;
	}

	.spinbtns {
		width: 16px;
		display: flex;
		flex-direction: column;
		background: linear-gradient(#e4e4e6, #cfd0d4);
		border-left: 1px solid #aaa;
	}

	.spinbtns svg {
		width: 10px;
		height: 8px;
		margin: 0 auto;
		display: block;
	}

	.ofsix {
		margin-left: 3px;
		font-size: 12px;
	}

	.combo {
		display: flex;
		align-items: center;
		box-sizing: border-box;
		height: 21px;
		flex: none;
		padding-left: 5px;
		border: 1px solid #a4a4a6;
		border-radius: 3px;
		background: linear-gradient(#e6e6e8, #cfd0d4);
	}

	.c1 { width: 167px; margin-left: -1px; padding-left: 4px; gap: 3px; }
	.c2 { width: 78px; margin-left: 5px; }
	.c3 { width: 149px; margin-left: 1px; }
	.c4 { width: 250px; height: 20px; }

	.ctext {
		flex: 1;
		font-size: 12px;
	}

	.cdrop {
		width: 15px;
		height: 100%;
		flex: none;
		border-left: 1px solid #a4a4a6;
		display: flex;
		align-items: center;
		justify-content: center;
	}

	.cdrop svg {
		width: 10px;
		height: 10px;
	}

	.cdrop.off svg {
		fill: #888;
	}

	/* Docks */
	.workspace {
		flex: 1;
		min-height: 0;
		display: flex;
	}

	.leftdock {
		width: 280px;
		flex: none;
		display: flex;
		flex-direction: column;
	}

	.dockhead {
		height: 22px;
		flex: none;
		box-sizing: border-box;
		display: flex;
		align-items: center;
		gap: 8px;
		padding: 0 2px 2px 0;
		font-size: 11px;
		white-space: nowrap;
	}

	.hgrip {
		flex: 1;
		height: 6px;
		background: radial-gradient(circle, #c4c4c4 45%, transparent 55%) 0 0 / 3px 3px;
	}

	.dockbtn {
		width: 13px;
		height: 13px;
		flex: none;
		margin-left: -6px;
		box-sizing: border-box;
		border: 1px solid #8a8a8a;
		border-radius: 2px;
		background: #e4e4e4;
	}

	.dockbtn:first-of-type {
		margin-left: 0;
	}

	.dockbtn svg {
		display: block;
		width: 11px;
		height: 11px;
	}

	.tree {
		width: 278px;
		height: 304px;
		flex: none;
		box-sizing: border-box;
		border: 1px solid #a8a8a8;
		border-top: 0;
		border-radius: 0 0 3px 3px;
		background: #fff;
		padding-top: 2px;
		font-size: 12px;
	}

	.node {
		height: 22px;
		display: flex;
		align-items: center;
	}

	.builtin {
		padding-left: 31px;
		gap: 7px;
	}

	.srv {
		width: 9px;
		height: 16px;
	}

	.eyeic {
		width: 14px;
		height: 11px;
		margin-left: 6px;
	}

	.sel {
		display: flex;
		align-items: center;
		gap: 3px;
		height: 18px;
		margin-left: 7px;
		padding: 0 4px 0 3px;
		background: #6b93bb;
		color: #fff;
		font-weight: 700;
	}

	.srcic {
		width: 13px;
		height: 13px;
	}

	.splitgrip {
		height: 6px;
		flex: none;
		display: flex;
		padding: 0 94px 0 93px;
	}

	.tabs {
		height: 21px;
		flex: none;
		box-sizing: border-box;
		display: flex;
		align-items: flex-end;
		padding-left: 1px;
		border-bottom: 1px solid #b0b0b0;
		font-size: 12px;
	}

	.tab {
		height: 17px;
		width: 93px;
		box-sizing: border-box;
		text-align: center;
		line-height: 17px;
		border: 1px solid #a8a8ac;
		border-bottom: 0;
		border-radius: 3px 3px 0 0;
		background: linear-gradient(#e6e6e8, #d3d4d8);
	}

	.tab.active {
		width: 86px;
		height: 21px;
		margin-bottom: -1px;
		line-height: 19px;
		background: #eeeeee;
	}

	.actions {
		display: flex;
		gap: 2px;
		margin: 8px 0 0 9px;
		font-size: 12px;
	}

	.btn {
		display: inline-flex;
		align-items: center;
		justify-content: center;
		gap: 4px;
		box-sizing: border-box;
		flex: none;
		border: 1px solid #a0a0a2;
		border-radius: 3px;
		background: linear-gradient(#e6e6e8, #d0d1d5);
		white-space: nowrap;
	}

	.btn.on {
		background: #c9cace;
	}

	.actions .btn {
		width: 75px;
		height: 26px;
	}

	.actions .apply {
		background: #93c97f;
		border-color: #5f8f50;
	}

	.actions .q {
		width: 30px;
	}

	.searchrow {
		display: flex;
		align-items: center;
		gap: 3px;
		margin: 9px 0 0 9px;
		height: 24px;
	}

	.search {
		width: 233px;
		height: 20px;
		box-sizing: border-box;
		padding: 0 5px;
		border: 1px solid #aaaaaa;
		border-radius: 2px;
		background: #fff;
		font: 12px 'DejaVu Sans', sans-serif;
	}

	.search::placeholder {
		color: #8a8a8a;
		opacity: 1;
	}

	.gearbtn {
		width: 26px;
		height: 24px;
		margin-left: -1px;
	}

	.propscroll {
		flex: none;
		margin: 5px 0 0 9px;
		height: 457px;
		display: grid;
		grid-template-columns: 245px 16px;
		grid-template-rows: 441px 16px;
	}

	.propclip {
		overflow: hidden;
	}

	.clipcontent {
		padding-left: 9px;
		margin-top: -3px;
	}

	.interp {
		height: 13px;
		display: flex;
		align-items: center;
		white-space: nowrap;
	}

	.lab1 {
		margin: 0 17px 0 5px;
	}

	.interp > span:last-child {
		margin-left: 5px;
	}

	.cb {
		width: 12px;
		height: 12px;
		flex: none;
		display: block;
		border: 1px solid #a6a6a6;
		border-radius: 2px;
		background: #f6f6f6;
	}

	.cb svg {
		display: block;
		width: 12px;
		height: 12px;
	}

	.dim {
		background: #e4e4e4;
	}

	.rule {
		height: 1px;
		margin-top: 10px;
		background: #8a8a8a;
	}

	.update {
		width: 79px;
		height: 24px;
		margin-top: 11px;
		font-size: 12px;
	}

	.checkline {
		display: flex;
		align-items: center;
		gap: 5px;
		white-space: nowrap;
	}

	.vtk {
		height: 14px;
		margin-top: 11px;
	}

	.listbox {
		margin-top: 9px;
		margin-right: -4px;
		box-sizing: border-box;
		border: 2px solid #b0b0b0;
		border-right: 0;
		border-radius: 3px 0 0 3px;
		background: #fff;
	}

	.parts { height: 174px; }
	.vol { height: 153px; margin-top: 6px; }
	.lag { height: 40px; margin-top: 7px; }

	.listhead {
		height: 24px;
		box-sizing: border-box;
		display: flex;
		align-items: center;
		gap: 3px;
		padding-left: 4px;
		border-bottom: 1px solid #b0b0b0;
		background: linear-gradient(#e6e6e8, #d0d1d5);
		font-size: 12px;
	}

	.listrow {
		height: 14px;
		display: flex;
		align-items: center;
		gap: 6px;
		padding-left: 3px;
		font-size: 12px;
	}

	.vbar {
		display: flex;
		flex-direction: column;
		margin-top: 2px;
	}

	.hbar {
		display: flex;
		grid-column: 1;
	}

	.sbtn {
		flex: none;
		width: 16px;
		height: 16px;
		box-sizing: border-box;
		border: 1px solid #a4a4a6;
		border-radius: 3px;
		background: linear-gradient(#e8e8ea, #d0d1d5);
		display: flex;
		align-items: center;
		justify-content: center;
	}

	.sbtn svg {
		width: 10px;
		height: 10px;
	}

	.track {
		flex: 1;
		background: repeating-conic-gradient(#d4d4d4 0 25%, #f6f6f6 0 50%) 0 0 / 2px 2px;
	}

	.t-a {
		flex: none;
		height: 59px;
	}

	.handle {
		flex: none;
		box-sizing: border-box;
		border: 1px solid #b0b0b2;
		border-radius: 2px;
		display: flex;
		align-items: center;
		justify-content: center;
	}

	.hv {
		height: 143px;
		background: linear-gradient(90deg, #e6e6e8, #d0d1d5);
	}

	.hc {
		height: 759px;
		background: linear-gradient(90deg, #e6e6e8, #d0d1d5);
	}

	.hh {
		width: 148px;
		background: linear-gradient(#e6e6e8, #d0d1d5);
	}

	.dots {
		width: 11px;
		height: 18px;
		background: radial-gradient(circle, #b4b4b4 45%, transparent 55%) 0 0 / 3px 3px;
	}

	.hh .dots {
		width: 18px;
		height: 11px;
	}

	.midgrip {
		width: 6px;
		flex: none;
	}

	/* Center */
	.center {
		width: 1172px;
		flex: none;
		display: flex;
		flex-direction: column;
	}

	.tabbar {
		height: 22px;
		flex: none;
		display: flex;
		align-items: flex-end;
		position: relative;
		z-index: 1;
	}

	.ltab {
		display: flex;
		align-items: center;
		justify-content: center;
		gap: 4px;
		box-sizing: border-box;
		height: 17px;
		border: 1px solid #a8a8ac;
		border-bottom: 0;
		border-radius: 3px 3px 0 0;
		background: linear-gradient(#e6e6e8, #d3d4d8);
		font-size: 12px;
	}

	.ltab svg {
		width: 11px;
		height: 11px;
	}

	.ltab.active {
		width: 114px;
		height: 21px;
		background: #eeeeee;
	}

	.plus {
		width: 34px;
		font-size: 14px;
	}

	.frame {
		flex: 1;
		min-height: 0;
		box-sizing: border-box;
		display: flex;
		flex-direction: column;
		border: 1px solid #a8a8a8;
		border-bottom: 0;
	}

	.viewtools {
		height: 22px;
		flex: none;
		box-sizing: border-box;
		display: flex;
		align-items: center;
		padding: 0 0 2px 1px;
	}

	.viewtools .sep {
		height: 20px;
		margin: 0 0.5px;
	}

	.vslot {
		width: 22px;
		flex: none;
		display: flex;
		justify-content: center;
	}

	.viewname {
		margin-left: auto;
		font-weight: 700;
		text-decoration: underline;
		text-underline-offset: 2px;
		font-size: 12px;
	}

	.vbtns {
		display: flex;
		gap: 1px;
		margin-left: 11px;
	}

	.vb {
		width: 22px;
		height: 20px;
		box-sizing: border-box;
		border: 1px solid #a8a8a8;
		border-radius: 2px;
		background: linear-gradient(#e8e8ea, #dcdcde);
		display: flex;
		align-items: center;
		justify-content: center;
	}

	.vb svg {
		width: 12px;
		height: 12px;
	}

	.view {
		flex: none;
		height: 866px;
		margin-left: 1px;
		box-sizing: border-box;
		border: 2px solid #0000f0;
		background: #fff;
		padding: 1px;
	}

	.scene {
		position: relative;
		height: 100%;
		background: #53576e;
		overflow: hidden;
	}

	.band {
		position: absolute;
		left: 79px;
		top: 372px;
		width: 1006px;
		height: 116px;
		background: #2e3a8f;
	}

	.layer {
		display: block;
		height: 3px;
		margin-top: 107px;
		background: #8a0a30;
	}

	.marker {
		position: absolute;
		left: 32px;
		top: 469px;
		width: 36px;
		height: 16px;
	}

	.legend {
		position: absolute;
		left: 335px;
		top: 567px;
		width: 578px;
		color: #f4f4f4;
		font-family: 'Liberation Sans', sans-serif;
		font-weight: 400;
		font-size: 20px;
	}

	.legtitle {
		text-align: center;
		line-height: 26px;
		letter-spacing: -0.1px;
	}

	.leglabels {
		display: flex;
		justify-content: space-between;
		margin-top: 8px;
		line-height: 24px;
		letter-spacing: -1px;
	}

	.legbar {
		display: block;
		width: 497px;
		height: 37px;
		margin: 4px 0 0 40px;
	}

	.axes {
		position: absolute;
		left: 94px;
		top: 687px;
		width: 90px;
		height: 80px;
	}

	.axlab {
		fill: #fff;
		font-family: 'Liberation Sans', sans-serif;
		font-size: 19px;
		text-anchor: middle;
	}

	/* Right dock */
	.rightdock {
		flex: 1;
		min-width: 0;
		display: flex;
		flex-direction: column;
		padding-left: 7px;
	}

	.rightdock .dockhead {
		padding-right: 0;
		padding-left: 8px;
	}

	.searchrow.cm {
		margin: 8px 0 0 10px;
		gap: 4px;
	}

	.cm .search {
		width: 287px;
	}

	.cm .gearbtn {
		width: 25px;
		margin-left: 0;
	}

	.arrayname {
		margin: 5px 0 0 10px;
		height: 20px;
		line-height: 16px;
		white-space: nowrap;
	}

	.cmscroll {
		flex: none;
		margin-left: 9px;
		height: 826px;
		display: flex;
		margin-top: -1px;
	}

	.cmcontent {
		width: 357px;
		height: 826px;
		overflow: hidden;
		flex: none;
	}

	.c23 {
		height: 23px;
		padding-left: 1px;
		gap: 4px;
	}

	.grouphead {
		margin: 0;
		box-sizing: border-box;
		border-bottom: 1px solid #555;
		font-size: 12px;
		font-weight: 700;
	}

	.map { height: 21px; line-height: 24px; }
	.par { height: 22px; line-height: 25px; margin-top: 2px; }
	.disc { height: 20px; line-height: 21px; margin-top: 4px; }

	.editor {
		display: flex;
		gap: 2px;
		margin-top: 6px;
	}

	.tf {
		width: 328px;
		height: 208px;
		background: #fff;
		display: block;
	}

	.sidetools {
		display: flex;
		flex-direction: column;
		gap: 1px;
	}

	.sb {
		width: 25px;
		height: 25px;
	}

	.dataline {
		display: flex;
		align-items: center;
		justify-content: space-between;
		margin-top: 6px;
		width: 355px;
		height: 20px;
	}

	.databox {
		width: 316px;
		height: 20px;
		box-sizing: border-box;
		border: 1px solid #aaaaaa;
		border-radius: 2px;
		background: #ececec;
	}

	.logl {
		height: 23px;
		margin-top: 4px;
		padding-left: 1px;
		gap: 4px;
	}

	.opac {
		height: 24px;
		margin-top: 1px;
		padding-left: 1px;
		gap: 4px;
	}

	.sublabel {
		line-height: 22px;
		height: 22px;
	}

	.l2 { margin-top: 2px; }

	.vtable {
		box-sizing: border-box;
		width: 355px;
		border: 2px solid #b0b0b0;
		border-radius: 3px;
		background: linear-gradient(90deg, #ececec 18px, #fff 18px);
		overflow: hidden;
	}

	.tall { height: 124px; margin-top: 3px; }
	.short { height: 94px; margin-top: 2px; }

	.vgrid {
		display: grid;
		grid-auto-rows: 30px;
	}

	.four { grid-template-columns: 18px 84px 84px 82px 85px; grid-template-rows: 22px; }
	.two { grid-template-columns: 18px 167px 168px; grid-template-rows: 21px; }

	.th, .rh {
		display: flex;
		align-items: center;
		justify-content: center;
		box-sizing: border-box;
		border: 1px solid #a8a8aa;
		background: linear-gradient(#e6e6e8, #d0d1d5);
		font-weight: 400;
		font-size: 12px;
	}

	.th {
		padding-bottom: 1px;
	}

	.td {
		display: flex;
		align-items: center;
		padding: 0 0 3px 3px;
		box-sizing: border-box;
		background: #fff;
		border-right: 1px solid #d0d0d0;
		border-bottom: 1px solid #d0d0d0;
	}

	.td.alt {
		background: #e8e8e8;
	}

	.spaceline {
		display: flex;
		justify-content: space-between;
		margin-top: 4px;
		width: 355px;
	}

	.sl {
		line-height: 13px;
		margin-top: 1px;
	}

	.nan {
		width: 355px;
		height: 24px;
		margin-top: 4px;
		justify-content: flex-start;
		padding-left: 6px;
		gap: 5px;
		display: flex;
		background: linear-gradient(#f0f0f0, #e4e4e6);
	}

	.dot {
		width: 13px;
		height: 13px;
		border-radius: 50%;
		background: #f6f600;
		border: 1px solid #666;
	}

	.dsc {
		margin-top: 2px;
	}

	.numline {
		display: flex;
		align-items: flex-start;
		margin-top: 3px;
		height: 29px;
	}

	.numlabel {
		width: 105px;
		line-height: 14.5px;
		flex: none;
	}

	.slider {
		position: relative;
		width: 117px;
		height: 5px;
		margin-top: 12px;
		flex: none;
		box-sizing: border-box;
		border: 1px solid #a8a8a8;
		border-radius: 2px;
		background: #f4f4f4;
	}

	.thumb {
		position: absolute;
		left: 26px;
		top: -7px;
		width: 10px;
		height: 14px;
		box-sizing: border-box;
		border: 1px solid #999;
		border-radius: 2px 2px 5px 5px;
		background: #dcdcde;
	}

	.num {
		width: 125px;
		height: 19px;
		margin: 5px 0 0 8px;
		box-sizing: border-box;
		padding: 0 5px;
		border: 1px solid #aaaaaa;
		border-radius: 2px;
		background: #fff;
		font: 12px 'DejaVu Sans', sans-serif;
	}

	.bottombtns {
		display: flex;
		gap: 2px;
		margin-top: 9px;
	}

	.b1 {
		width: 29px;
		height: 24px;
	}

	.b2 {
		width: 110px;
		height: 24px;
		margin-left: 118px;
	}

	.cmbar {
		margin-left: 1px;
		width: 16px;
	}

	/* Status bar */
	.status {
		height: 27px;
		flex: none;
		box-sizing: border-box;
		border-top: 2px solid #a8a8a8;
		padding: 2px 4px 0 926px;
	}

	.statusbox {
		height: 23px;
		box-sizing: border-box;
		border: 2px solid #a0a0a0;
		border-right-width: 1px;
		border-radius: 2px;
	}

	.stbtn {
		display: flex;
		align-items: center;
		justify-content: center;
		width: 23px;
		height: 19px;
		box-sizing: border-box;
		border-right: 1px solid #a0a0a0;
	}

	.stbtn svg {
		width: 12px;
		height: 12px;
	}
</style>
